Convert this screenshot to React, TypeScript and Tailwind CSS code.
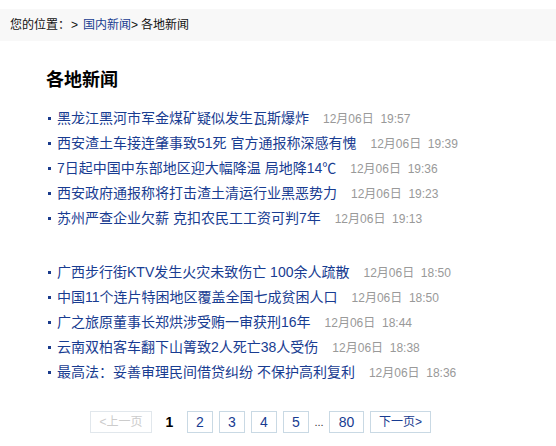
import React from "react";

const group1 = [
  ["黑龙江黑河市军金煤矿疑似发生瓦斯爆炸", "19:57"],
  ["西安渣土车接连肇事致51死 官方通报称深感有愧", "19:39"],
  ["7日起中国中东部地区迎大幅降温 局地降14℃", "19:36"],
  ["西安政府通报称将打击渣土清运行业黑恶势力", "19:23"],
  ["苏州严查企业欠薪 克扣农民工工资可判7年", "19:13"],
];
const group2 = [
  ["广西步行街KTV发生火灾未致伤亡 100余人疏散", "18:50"],
  ["中国11个连片特困地区覆盖全国七成贫困人口", "18:50"],
  ["广之旅原董事长郑烘涉受贿一审获刑16年", "18:44"],
  ["云南双柏客车翻下山箐致2人死亡38人受伤", "18:38"],
  ["最高法：妥善审理民间借贷纠纷 不保护高利复利", "18:36"],
];

function List({ items }: { items: string[][] }) {
  return (
    <ul className="pl-[48px]">
      {items.map(([t, time], i) => (
        <li key={i} className="h-[25px] flex items-center">
          <span className="w-[3px] h-[3px] bg-[#1a3b8c] mr-[6px] shrink-0" />
          <a className="text-[14px] text-[#183c91] whitespace-nowrap leading-[25px]">{t}</a>
          <span className="ml-[14px] text-[12px] text-[#999999] whitespace-nowrap">
            12月06日{"\u00a0\u00a0"}{time}
          </span>
        </li>
      ))}
    </ul>
  );
}

export default function App() {
  return (
    <div
      className="w-[556px] h-[446px] bg-white overflow-hidden"
      style={{ fontFamily: '"Liberation Sans", "Noto Sans CJK SC", sans-serif' }}
    >
      <div className="mt-[9px] h-[32px] bg-[#f8f8f8] pl-[10px] flex items-center text-[12px] text-[#111]">
        <span>您的位置：</span>
        <span className="ml-[1px]">&gt;</span>
        <a className="ml-[5px] text-[#183c91]">国内新闻</a>
        <span>&gt;</span>
        <span className="ml-[3px]">各地新闻</span>
      </div>
      <h1 className="mt-[27px] pl-[46px] text-[18px] leading-[24px] font-bold text-black">各地新闻</h1>
      <div className="mt-[14px]">
        <List items={group1} />
      </div>
      <div className="mt-[29px]">
        <List items={group2} />
      </div>
      <div className="mt-[26px] pl-[90px] flex items-center gap-[6px] h-[22px]">
        <span className="w-[62px] h-[22px] border border-[#e1e7ec] text-[#cccccc] text-[12px] flex items-center justify-center">
          &lt;上一页
        </span>
        <span className="w-[23px] h-[22px] text-[14px] font-bold text-black flex items-center justify-center">1</span>
        {["2", "3", "4", "5"].map((n) => (
          <a
            key={n}
            className="w-[26px] h-[22px] border border-[#c9d9e4] text-[14px] text-[#183c91] flex items-center justify-center"
          >
            {n}
          </a>
        ))}
        <span className="w-[8px] text-[11px] text-[#333] flex items-center justify-center">...</span>
        <a className="w-[35px] h-[22px] border border-[#c9d9e4] text-[14px] text-[#183c91] flex items-center justify-center">
          80
        </a>
        <a className="w-[61px] h-[22px] border border-[#c9d9e4] text-[12px] text-[#183c91] flex items-center justify-center">
          下一页&gt;
        </a>
      </div>
    </div>
  );
}
